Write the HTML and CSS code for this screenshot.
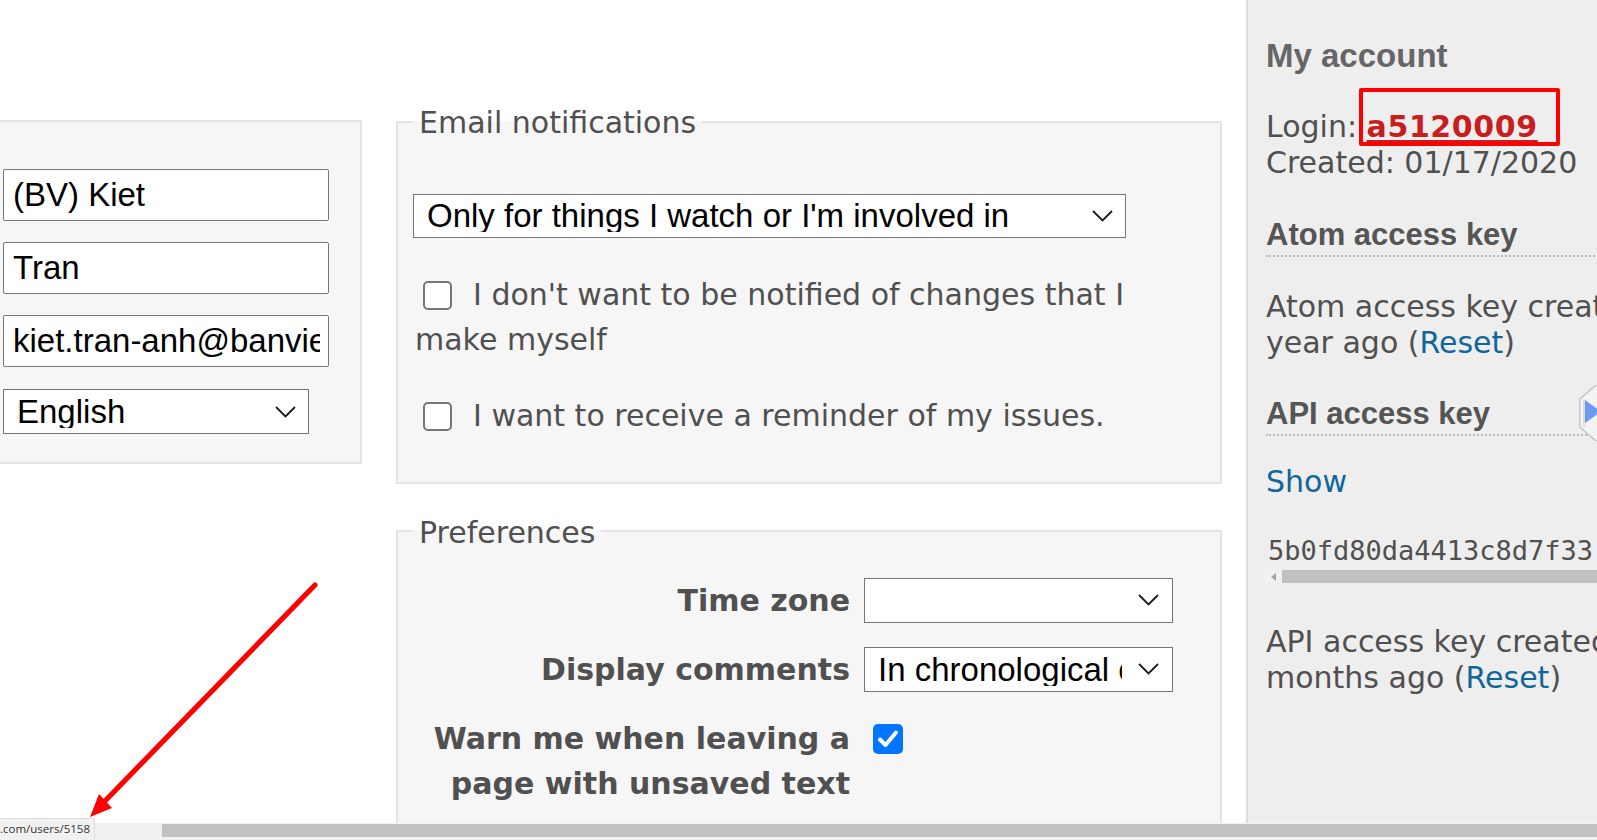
FILE: index.html
```html
<!DOCTYPE html>
<html lang="en">
<head>
<meta charset="utf-8">
<title>My account</title>
<link rel="stylesheet" href="styles.css">
</head>
<body>
<div class="window">
  <div class="page">
    <main class="content">
      <div class="box info">
        <div class="fields">
          <input class="field" type="text" value="(BV) Kiet">
          <input class="field" type="text" value="Tran">
          <input class="field" type="text" value="kiet.tran-anh@banvie">
          <div class="select lang"><span class="sel-text">English</span><svg class="chev" width="21" height="12" viewBox="0 0 21 12"><polyline points="1,1 10.5,10.5 20,1" fill="none" stroke="#1a1a1a" stroke-width="1.8"/></svg></div>
        </div>
      </div>
      <div class="col">
        <fieldset class="box group">
          <legend>Email notifications</legend>
          <div class="select notif"><span class="sel-text">Only for things I watch or I'm involved in</span><svg class="chev" width="21" height="12" viewBox="0 0 21 12"><polyline points="1,1 10.5,10.5 20,1" fill="none" stroke="#1a1a1a" stroke-width="1.8"/></svg></div>
          <p class="check-line first"><span class="cb"></span>I don't want to be notified of changes that I make myself</p>
          <p class="check-line"><span class="cb"></span>I want to receive a reminder of my issues.</p>
        </fieldset>
        <fieldset class="box group prefs">
          <legend>Preferences</legend>
          <div class="pref-grid">
            <label class="pref-label">Time zone</label>
            <div class="select pref"><span class="sel-text"></span><svg class="chev" width="21" height="12" viewBox="0 0 21 12"><polyline points="1,1 10.5,10.5 20,1" fill="none" stroke="#1a1a1a" stroke-width="1.8"/></svg></div>
            <label class="pref-label">Display comments</label>
            <div class="select pref"><span class="sel-text">In chronological order</span><svg class="chev" width="21" height="12" viewBox="0 0 21 12"><polyline points="1,1 10.5,10.5 20,1" fill="none" stroke="#1a1a1a" stroke-width="1.8"/></svg></div>
            <label class="pref-label">Warn me when leaving a page with unsaved text</label>
            <div class="pref-check"><span class="cb checked"><svg width="30" height="30" viewBox="0 0 30 30"><polyline points="7,15.5 12.5,21 23,8.5" fill="none" stroke="#fff" stroke-width="4" stroke-linecap="round" stroke-linejoin="round"/></svg></span></div>
          </div>
        </fieldset>
      </div>
    </main>
    <aside class="sidebar">
      <h3 class="side-title">My account</h3>
      <p class="side-text login-p">Login: <span class="login-wrap"><a class="login" href="#">a5120009</a><span class="annot-box"></span></span><br>Created: 01/17/2020</p>
      <h4 class="side-sub">Atom access key</h4>
      <p class="side-text atom-p">Atom access key created<br>year ago (<a class="link" href="#">Reset</a>)</p>
      <h4 class="side-sub api-h">API access key</h4>
      <p class="side-text show-p"><a class="link" href="#">Show</a></p>
      <pre class="api-key">5b0fd80da4413c8d7f33</pre>
      <div class="mini-scroll"><span class="mini-btn"><svg width="6" height="8" viewBox="0 0 6 8"><polygon points="5,0 0,4 5,8" fill="#a3a3a3"/></svg></span><span class="mini-thumb"></span></div>
      <p class="side-text api-p">API access key created<br>months ago (<a class="link" href="#">Reset</a>)</p>
      <span class="toggle"><svg width="20" height="56" viewBox="0 0 20 56"><polygon points="21,0 17,0 0.8,14 0.8,42 17,56 21,56" fill="#f3f3f3" stroke="#c4c4c4" stroke-width="1.5"/><polygon points="4,14 4,42 6,42 6,15" fill="#dcdcdc"/><polygon points="6,15 22,26.5 6,38" fill="#6b9bf2"/></svg></span>
    </aside>
  </div>
  <div class="hscroll"><span class="hthumb"></span></div>
</div>
<svg class="arrow" width="250" height="260" viewBox="0 0 250 260"><line x1="235" y1="15" x2="24" y2="232" stroke="#ff0000" stroke-width="5.2" stroke-linecap="round"/><polygon points="10,247 32,238 19,224" fill="#ff0000"/></svg>
<div class="status">.com/users/5158</div>
</body>
</html>
```
FILE: styles.css
```css
* { box-sizing: border-box; }
html, body { margin: 0; padding: 0; }
body {
  width: 1597px;
  height: 840px;
  overflow: hidden;
  position: relative;
  background: #fff;
  color: #505050;
  font-family: "DejaVu Sans", Verdana, sans-serif;
  font-size: 30px;
}
.window { display: flex; flex-direction: column; height: 840px; }
.page { display: flex; height: 823px; overflow: hidden; }

.content {
  flex: 0 0 1246px;
  display: flex;
  align-items: flex-start;
  gap: 34px;
  padding-top: 98px;
}

.box {
  background: #f6f6f6;
  border: 2px solid #e4e4e4;
}

.info {
  flex: 0 0 562px;
  margin-left: -200px;
  margin-top: 22px;
  height: 344px;
  padding-top: 47px;
}
.fields {
  width: 326px;
  margin-left: 201px;
  display: flex;
  flex-direction: column;
  gap: 21px;
}
.field {
  display: block;
  width: 326px;
  height: 52px;
  margin: 0;
  border: 1px solid #767676;
  border-radius: 2px;
  background: #fff;
  padding: 0 8px 0 9px;
  font-family: "Liberation Sans", Arial, sans-serif;
  font-size: 33px;
  color: #000;
  outline: none;
}

.select {
  display: flex;
  align-items: center;
  background: #fff;
  border: 1px solid #767676;
  font-family: "Liberation Sans", Arial, sans-serif;
  font-size: 33px;
  line-height: 1;
  color: #000;
}
.sel-text {
  flex: 1 1 auto;
  min-width: 0;
  overflow: hidden;
  white-space: nowrap;
}
.chev { flex: 0 0 auto; display: block; }
.lang { width: 306px; height: 45px; margin-top: 1px; padding: 0 12px 0 13px; }
.notif { width: 713px; height: 44px; margin-top: 48.5px; padding: 0 12px 0 13px; }
.pref { width: 309px; height: 45px; padding: 0 13px 0 13px; }
.pref .sel-text { margin-right: 16px; }

.col { flex: 0 0 826px; }

.group {
  margin: 0;
  min-width: 0;
  padding: 0 15px 44px;
}
.group legend {
  padding: 2px 6px 0;
  font-size: 30px;
  line-height: 45px;
  color: #505050;
}
.check-line {
  margin: 31px 0 0;
  padding-left: 2px;
  line-height: 45px;
}
.check-line.first { margin-top: 34px; }
.cb {
  display: inline-block;
  width: 29px;
  height: 29px;
  margin: 0 21px 0 8px;
  border: 2px solid #767676;
  border-radius: 5px;
  background: #fff;
  vertical-align: -5px;
}
.cb.checked {
  width: 30px;
  height: 30px;
  margin: 0;
  border: none;
  background: #0075ff;
  border-radius: 5px;
  display: block;
}
.cb.checked svg { display: block; }

.prefs { margin-top: 24px; min-height: 340px; }
.pref-grid {
  display: grid;
  grid-template-columns: 437px 309px;
  column-gap: 14px;
  row-gap: 24px;
  margin-top: 23px;
}
.pref-label {
  text-align: right;
  font-weight: bold;
  line-height: 45px;
  color: #505050;
}
.pref-check { padding: 8px 0 0 9px; }

.sidebar {
  flex: 0 0 480px;
  position: relative;
  background: #eeeeee;
  border-left: 2px solid #dddddd;
  padding: 36px 0 0 18px;
  color: #505050;
  white-space: nowrap;
}
.side-title {
  margin: 0;
  font-family: "Liberation Sans", Arial, sans-serif;
  font-weight: bold;
  font-size: 33px;
  line-height: 40px;
  color: #666;
}
.side-text {
  margin: 0;
  font-size: 30px;
  line-height: 36px;
}
.login-p { margin-top: 33px; }
.side-sub {
  margin: 36px 0 0;
  padding-bottom: 2px;
  font-family: "Liberation Sans", Arial, sans-serif;
  font-weight: bold;
  font-size: 31px;
  line-height: 36px;
  color: #555;
  border-bottom: 2px dotted #bbbbbb;
}
.api-h { margin-top: 35px; }
.atom-p { margin-top: 32px; }
.show-p { margin-top: 27.5px; }
.api-p { margin-top: 40.5px; }
.link { color: #116699; text-decoration: none; }
.login-wrap { position: relative; }
.login {
  color: #c81e1e;
  font-weight: bold;
  letter-spacing: 0.6px;
  text-decoration: underline;
  text-decoration-thickness: 2px;
  text-underline-offset: 3px;
}
.annot-box {
  position: absolute;
  left: -8px;
  right: -22px;
  top: -21px;
  bottom: -2px;
  border: 4px solid #ff0000;
  border-radius: 2px;
}
.api-key {
  margin: 33px 0 0;
  font-family: "DejaVu Sans Mono", "Liberation Mono", monospace;
  font-size: 27px;
  line-height: 36px;
  color: #505050;
  padding-left: 2px;
}
.mini-scroll {
  display: flex;
  height: 13px;
  margin-top: 1.5px;
  margin-left: -1px;
  background: #f1f1f1;
}
.mini-btn {
  flex: 0 0 17px;
  display: flex;
  align-items: center;
  justify-content: center;
}
.mini-thumb { flex: 1 1 auto; background: #c1c1c1; }
.toggle {
  position: absolute;
  left: 331px;
  top: 385px;
  width: 20px;
  height: 56px;
}
.toggle svg { display: block; }

.hscroll {
  flex: 0 0 17px;
  display: flex;
  background: #f1f1f1;
  padding: 1px 0 3px 162px;
}
.hthumb { flex: 1 1 auto; background: #c1c1c1; }

.arrow {
  position: absolute;
  left: 80px;
  top: 570px;
}
.status {
  position: absolute;
  left: 0;
  bottom: 0;
  width: 95px;
  height: 22px;
  background: #f1f1f1;
  border-top: 1px solid #dcdcdc;
  border-right: 1px solid #dcdcdc;
  border-top-right-radius: 3px;
  font-family: "Open Sans", "Noto Sans", sans-serif;
  font-size: 11.5px;
  line-height: 20px;
  color: #333;
  padding-left: 0;
  white-space: nowrap;
  overflow: hidden;
}
```
